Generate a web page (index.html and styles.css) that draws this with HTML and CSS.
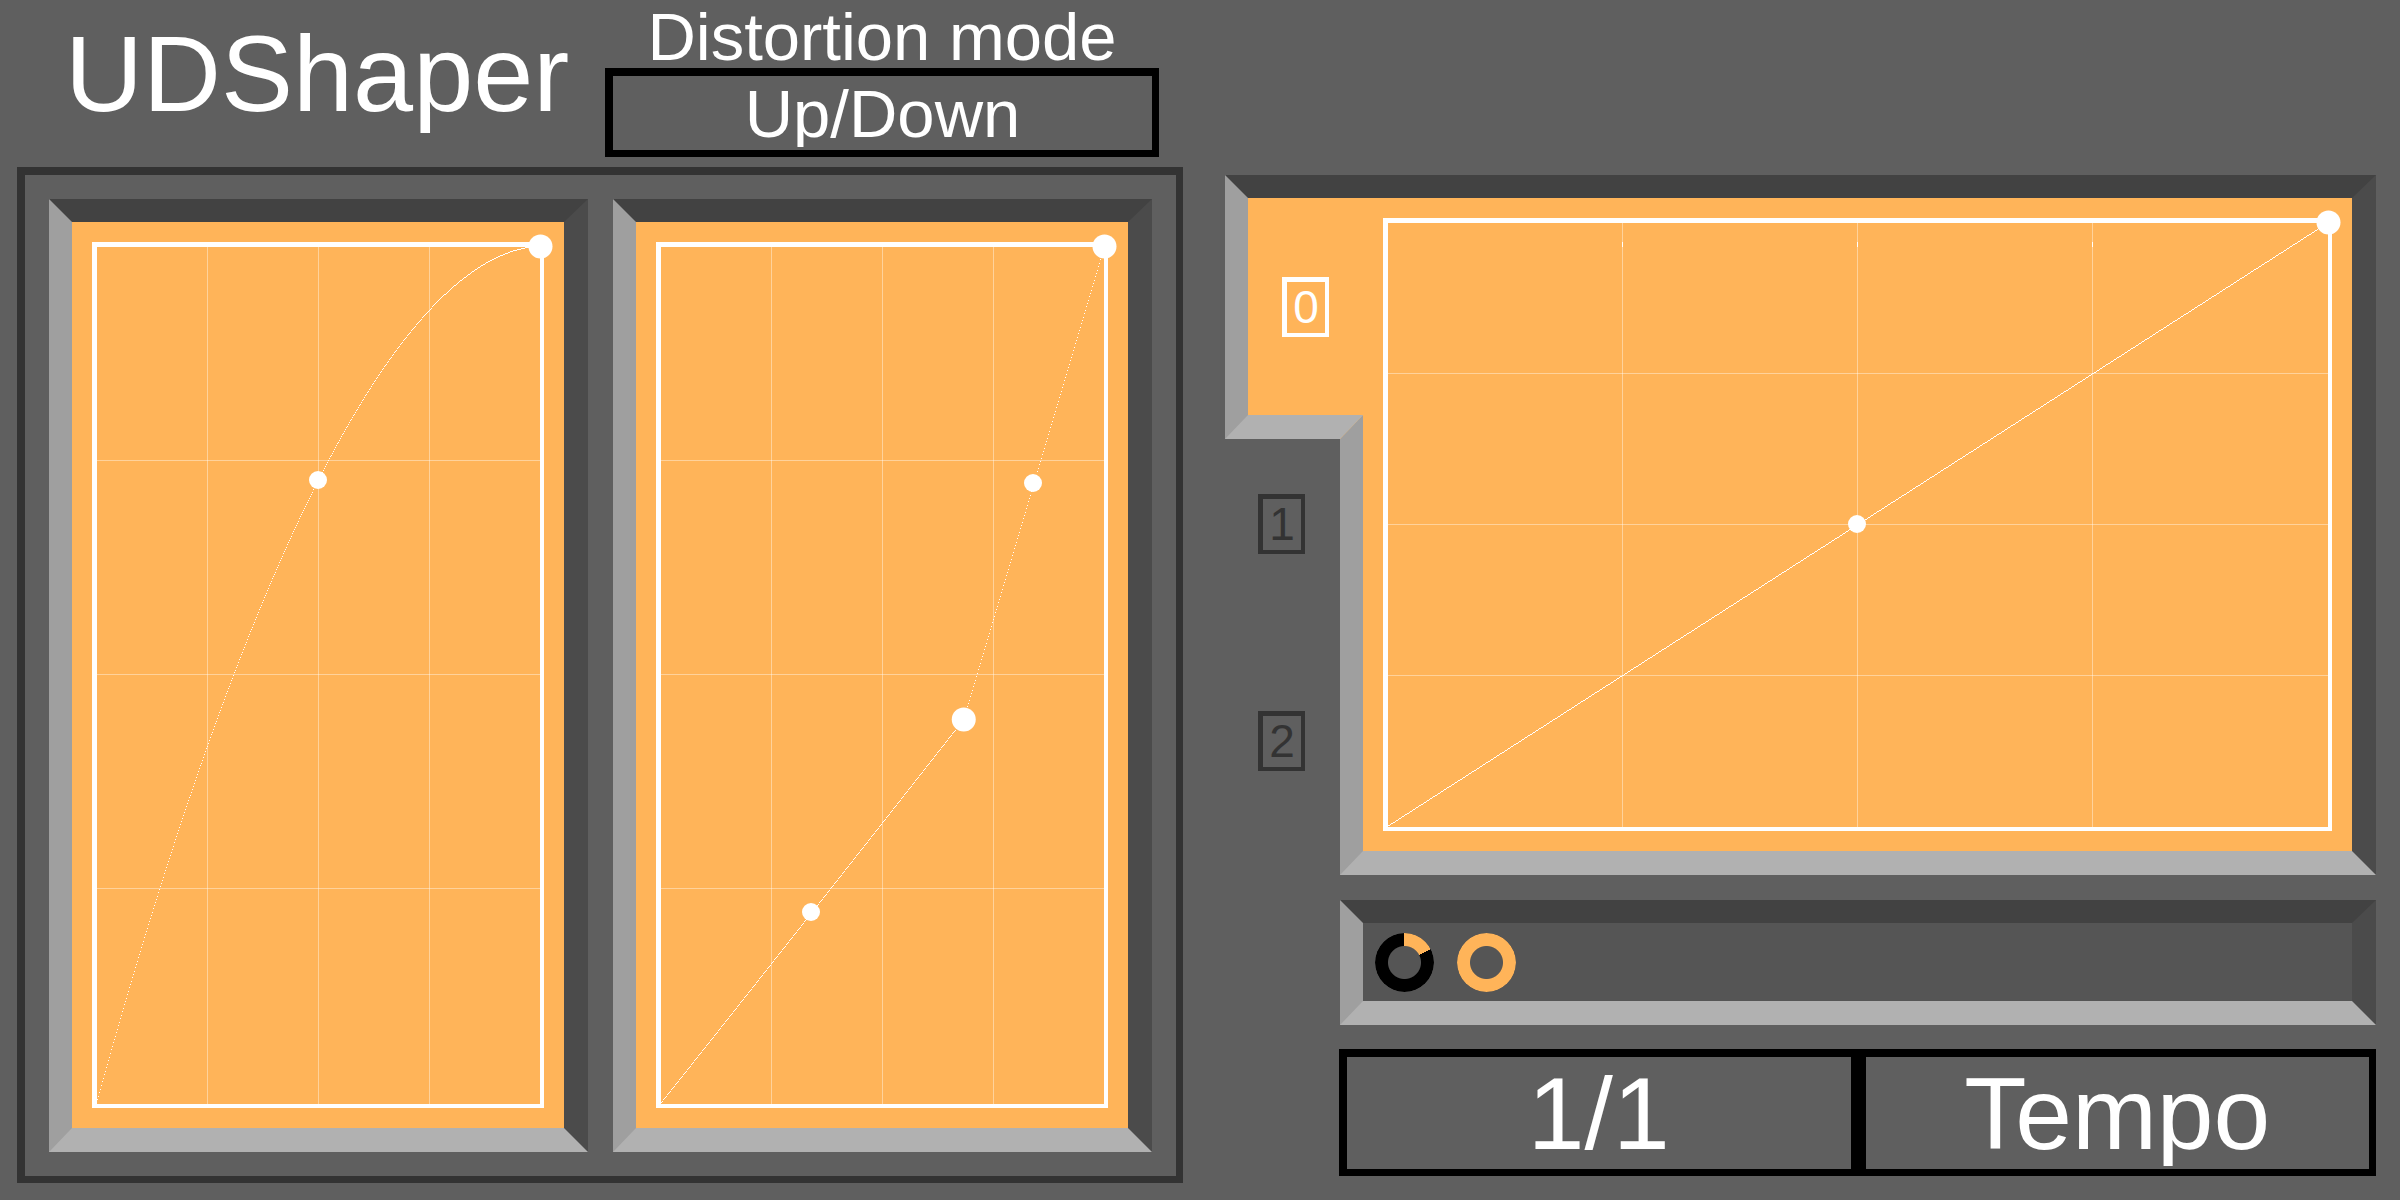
FILE: index.html
```html
<!DOCTYPE html>
<html lang="en">
<head>
  <meta charset="utf-8">
  <meta name="viewport" content="width=device-width, initial-scale=1">
  <title>UDShaper</title>
  <link rel="stylesheet" href="styles.css">
</head>
<body>
  <main class="plugin">
    <div class="shaping">
      <header class="header">
        <h1 class="title">UDShaper</h1>
        <div class="mode">
          <label class="mode-label" for="mode">Distortion mode</label>
          <select class="select mode-select" id="mode">
            <option selected>Up/Down</option>
            <option>Left/Right</option>
            <option>Mid/Side</option>
            <option>Positive/Negative</option>
          </select>
        </div>
      </header>
      <section class="shapers">
        <div class="bevel"><div class="graph" data-curve="0,0 1,1" data-mids="0.7275"></div></div>
        <div class="bevel"><div class="graph" data-curve="0,0 0.683,0.448 1,1" data-mids="0.498 0.5"></div></div>
      </section>
    </div>

    <div class="modulation">
      <section class="envelopes">
        <div class="tabs" role="tablist">
          <button class="tab tab-active" type="button" role="tab" aria-selected="true"><span class="tab-number">0</span></button>
          <button class="tab" type="button" role="tab" aria-selected="false"><span class="tab-number">1</span></button>
          <button class="tab" type="button" role="tab" aria-selected="false"><span class="tab-number">2</span></button>
        </div>
        <div class="bevel"><div class="graph" data-curve="0,0 1,1" data-mids="0.5" data-ticks="19"></div></div>
      </section>
      <section class="bevel knobs">
        <input class="knob" type="range" min="0" max="1000" value="175" aria-label="Modulation amount 1" style="--turn: 17.5%">
        <input class="knob" type="range" min="0" max="1000" value="1000" aria-label="Modulation amount 2" style="--turn: 100%">
      </section>
      <section class="timing">
        <select class="select timing-select" aria-label="Rate">
          <option selected>1/1</option>
          <option>1/2</option>
          <option>1/4</option>
        </select>
        <select class="select timing-select" aria-label="Rate mode">
          <option selected>Tempo</option>
          <option>Seconds</option>
        </select>
      </section>
    </div>
  </main>
  <script src="graph.js"></script>
</body>
</html>
```
FILE: styles.css
```css
:root {
  --background: #5f5f5f;
  --accent: #ffb459;
  --outline: #333333;
  --bevel-top: #424242;
  --bevel-right: #4b4b4b;
  --bevel-bottom: #b1b1b1;
  --bevel-left: #9f9f9f;
}

* {
  box-sizing: border-box;
}

body {
  margin: 0;
  background: var(--background);
  color: #ffffff;
  font-family: "Liberation Sans", Arial, sans-serif;
}

.plugin {
  display: grid;
  grid-template-columns: 1166fr 1151fr;
  gap: 42px;
  min-height: 100vh;
  padding: 0 24px 0 17px;
}

.shaping,
.modulation {
  display: flex;
  flex-direction: column;
  min-width: 0;
}

.shaping {
  padding-bottom: 17px;
}

.modulation {
  padding: 175px 0 24px;
}

.header {
  display: flex;
  justify-content: space-between;
  align-items: flex-start;
  padding: 0 24px 10px 48px;
}

.title {
  margin: 0;
  font-size: 108px;
  font-weight: 400;
  line-height: 148px;
}

.mode {
  display: flex;
  flex-direction: column;
  width: 554px;
  padding-top: 6px;
}

.mode-label {
  font-size: 67px;
  line-height: 62px;
  text-align: center;
}

.select {
  appearance: none;
  margin: 0;
  padding: 0 0 3px;
  border: solid #000000;
  border-width: 8px 7px 7px 8px;
  border-radius: 0;
  background: transparent;
  color: #ffffff;
  font-family: inherit;
  text-align: center;
  text-align-last: center;
}

.mode-select {
  height: 89px;
  font-size: 67px;
}

.shapers {
  display: grid;
  flex: 1;
  grid-template-columns: 1fr 1fr;
  gap: 25px;
  padding: 24px;
  border: solid var(--outline);
  border-width: 8px 7px 7px 8px;
}

.bevel {
  display: flex;
  flex: 1;
  min-width: 0;
  padding: 20px;
  border-style: solid;
  border-width: 23px 24px 24px 23px;
  border-color: var(--bevel-top) var(--bevel-right) var(--bevel-bottom) var(--bevel-left);
  background: var(--accent);
}

.graph {
  flex: 1;
  min-width: 0;
  border: solid #ffffff;
  border-width: 5px 4px 4px 5px;
}

.plot {
  display: block;
  width: 100%;
  height: 100%;
  overflow: visible;
}

.plot-grid {
  fill: #ffffff;
  fill-opacity: 0.4;
}

.plot-curve,
.plot-tick,
.plot-point {
  fill: #ffffff;
}

.envelopes {
  display: flex;
  flex: 1;
}

.tabs {
  display: grid;
  grid-template-rows: repeat(3, 1fr);
  width: 115px;
  padding: 23px 0 26px;
}

.tab {
  display: flex;
  align-items: center;
  justify-content: center;
  padding: 0 2px 0 0;
  border: 0;
  background: transparent;
  color: var(--outline);
  font: inherit;
}

/* The selected tab covers the edge of the panel, so both read as one recess. */
.tab-active {
  z-index: 1;
  margin: -23px -23px -24px 0;
  padding: 0;
  border-style: solid;
  border-width: 23px 0 24px 23px;
  border-color: var(--bevel-top) transparent var(--bevel-bottom) var(--bevel-left);
  background: var(--accent);
  color: #ffffff;
  clip-path: polygon(0 0, 100% 0, 100% calc(100% - 24px), calc(100% - 23px) 100%, 0 100%);
}

.tab-number {
  width: 47px;
  height: 60px;
  border: solid currentColor;
  border-width: 5px 4px 4px 5px;
  font-size: 46px;
  line-height: 50px;
  text-align: center;
}

.knobs {
  flex: none;
  align-items: center;
  gap: 23px;
  height: 125px;
  margin: 25px 0 24px 115px;
  padding: 0 12px;
  background: #555555;
}

.knob {
  appearance: none;
  width: 59px;
  height: 59px;
  margin: 0;
  border-radius: 50%;
  background: conic-gradient(var(--accent) var(--turn), #000000 0);
  mask: radial-gradient(circle, transparent 16px, #000000 17px);
}

.knob::-webkit-slider-thumb {
  appearance: none;
  width: 0;
  height: 0;
}

.timing {
  display: grid;
  grid-template-columns: 1fr 1fr;
  margin-left: 114px;
}

.timing-select {
  min-width: 0;
  height: 127px;
  font-size: 102px;
}
```
FILE: graph.js
```js
const SVG = "http://www.w3.org/2000/svg";

function add(svg, tag, className, attributes) {
  const node = document.createElementNS(SVG, tag);
  node.setAttribute("class", className);
  for (const [name, value] of Object.entries(attributes)) {
    node.setAttribute(name, value);
  }
  svg.append(node);
}

// Power curve through (0,0), (0.5,mid) and (1,1).
function shape(t, mid) {
  return mid > 0.5
    ? 1 - Math.pow(1 - t, Math.log(1 - mid) / Math.log(0.5))
    : Math.pow(t, Math.log(mid) / Math.log(0.5));
}

function draw(graph) {
  const svg = graph.firstElementChild;
  const width = graph.clientWidth + 1;
  const height = graph.clientHeight + 1;
  svg.replaceChildren();

  for (let i = 1; i < 4; i++) {
    const x = Math.floor(width / 4) * i - 1;
    const y = Math.floor(height / 4) * i - 1;
    add(svg, "rect", "plot-grid", { x, y: 0, width: 1, height: height - 1 });
    add(svg, "rect", "plot-grid", { x: 0, y, width: width - 1, height: 1 });
    if (graph.dataset.ticks) {
      add(svg, "rect", "plot-tick", { x, y: graph.dataset.ticks, width: 1, height: 5 });
    }
  }

  const toX = (x) => x * width - 1;
  const toY = (y) => (1 - y) * (height - 1) - 1;
  const nodes = graph.dataset.curve.split(" ").map((pair) => pair.split(",").map(Number));
  const mids = graph.dataset.mids.split(" ").map(Number);

  // One pixel for each column, as the curve is sampled once per column.
  let path = "";
  mids.forEach((mid, i) => {
    const [x0, y0] = nodes[i];
    const [x1, y1] = nodes[i + 1];
    const end = toX(x1);
    for (let x = Math.max(0, Math.ceil(toX(x0))); x < end; x++) {
      const t = ((x + 1) / width - x0) / (x1 - x0);
      path += `M${x} ${Math.round(toY(y0 + (y1 - y0) * shape(t, mid)))}h1v1h-1z`;
    }
  });
  add(svg, "path", "plot-curve", { d: path });

  mids.forEach((mid, i) => {
    const [x0, y0] = nodes[i];
    const [x1, y1] = nodes[i + 1];
    add(svg, "circle", "plot-point", { cx: Math.floor(toX((x0 + x1) / 2)), cy: Math.round(toY(y0 + (y1 - y0) * mid)), r: 9 });
    add(svg, "circle", "plot-point", { cx: toX(x1) + 0.5, cy: toY(y1) + 0.5, r: 12 });
  });
}

document.querySelectorAll(".graph").forEach((graph) => {
  const svg = document.createElementNS(SVG, "svg");
  svg.setAttribute("class", "plot");
  graph.append(svg);
  draw(graph);
  new ResizeObserver(() => draw(graph)).observe(graph);
});
```
